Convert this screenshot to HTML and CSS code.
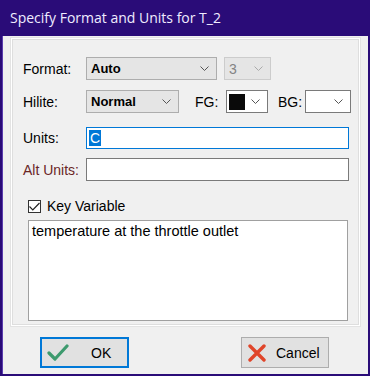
FILE: index.html
```html
<!DOCTYPE html>
<html lang="en">
<head>
    <meta charset="UTF-8">
    <title>Specify Format and Units for T_2</title>
    <link rel="stylesheet" href="styles.css">
</head>
<body>

<div class="window">
    <div class="titlebar">Specify Format and Units for T_2</div>

    <div class="client">
        <div class="group">
            <!-- формат -->
            <div class="row row-format">
                <span class="label">Format:</span>
                <div class="select sel-format"><span class="val bold">Auto</span><svg class="chev" width="9" height="5" viewBox="0 0 9 5"><path d="M0.5 0.5 L4.5 4.5 L8.5 0.5" fill="none" stroke="#555" stroke-width="1"/></svg></div>
                <div class="select sel-digits disabled"><span class="val">3</span><svg class="chev" width="9" height="5" viewBox="0 0 9 5"><path d="M0.5 0.5 L4.5 4.5 L8.5 0.5" fill="none" stroke="#aaa" stroke-width="1"/></svg></div>
            </div>

            <div class="row row-hilite">
                <span class="label">Hilite:</span>
                <div class="select sel-hilite"><span class="val bold">Normal</span><svg class="chev" width="9" height="5" viewBox="0 0 9 5"><path d="M0.5 0.5 L4.5 4.5 L8.5 0.5" fill="none" stroke="#555" stroke-width="1"/></svg></div>
                <span class="small-label fg-label">FG:</span>
                <div class="select white sel-fg"><span class="swatch"></span><svg class="chev" width="9" height="5" viewBox="0 0 9 5"><path d="M0.5 0.5 L4.5 4.5 L8.5 0.5" fill="none" stroke="#555" stroke-width="1"/></svg></div>
                <span class="small-label bg-label">BG:</span>
                <div class="select white sel-bg"><svg class="chev" width="9" height="5" viewBox="0 0 9 5"><path d="M0.5 0.5 L4.5 4.5 L8.5 0.5" fill="none" stroke="#555" stroke-width="1"/></svg></div>
            </div>

            <div class="row row-units">
                <span class="label">Units:</span>
                <div class="input focused"><span class="selected">C</span></div>
            </div>

            <div class="row row-alt">
                <span class="label alt">Alt Units:</span>
                <div class="input"></div>
            </div>

            <div class="check-row">
                <span class="checkbox"><svg width="11" height="9" viewBox="0 0 11 9"><path d="M0.5 4.5 L3.8 7.8 L10.5 1" fill="none" stroke="#222" stroke-width="1.2"/></svg></span>
                <span class="check-text">Key Variable</span>
            </div>

            <div class="notes">temperature at the throttle outlet</div>
        </div>

        <div class="buttons">
            <div class="btn btn-ok">
                <svg width="22" height="18" viewBox="0 0 22 18"><path d="M2 9 L8 15 L20 2" fill="none" stroke="#3d9a6e" stroke-width="3.2" stroke-linejoin="round" stroke-linecap="round"/></svg>
                <span>OK</span>
            </div>
            <div class="btn btn-cancel">
                <svg width="18" height="18" viewBox="0 0 18 18"><path d="M2 2 L16 16 M16 2 L2 16" fill="none" stroke="#e0452a" stroke-width="3.4" stroke-linecap="round"/></svg>
                <span>Cancel</span>
            </div>
        </div>
    </div>
</div>

</body>
</html>
```

FILE: styles.css
```css
body {
    margin: 0;
    padding: 0;
    font-family: "Liberation Sans", Arial, sans-serif;
    font-size: 14px;
    color: #000;
    background-color: #2a0c78;
}
.window {
    width: 370px;
    height: 376px;
    box-sizing: border-box;
    background-color: #2a0c78;
    display: flex;
    flex-direction: column;
}
.titlebar {
    height: 36px;
    line-height: 36px;
    padding-left: 10px;
    color: #f0ecff;
    font-family: "Open Sans", "Noto Sans", sans-serif;
    font-size: 14px;
}
.client {
    flex: 1;
    margin: 0 2px 2px 2px;
    background-color: #f0f0f0;
    padding-top: 2px;
    border-left: 1px solid #5a3cae;
}
.group {
    margin: 0 8px 0 8px;
    height: 288px;
    box-sizing: border-box;
    border: 1px solid #ffffff;
    box-shadow: inset 0 0 0 1px #dedede, 0 0 0 1px #e3e3e3;
    padding: 18px 0 0 11px;
}
.row {
    display: flex;
    align-items: center;
}
.label {
    width: 63px;
    flex-shrink: 0;
}
.label.alt {
    color: #6a2626;
}
.select {
    height: 23px;
    box-sizing: border-box;
    border: 1px solid #adadad;
    background-color: #e5e5e5;
    display: flex;
    align-items: center;
    padding: 0 7px 0 4px;
    position: relative;
}
.select .val {
    flex: 1;
}
.bold {
    font-weight: bold;
    font-size: 13px;
}
.chev {
    flex-shrink: 0;
}
.sel-format {
    width: 131px;
}
.sel-digits {
    width: 47px;
    margin-left: 7px;
    border-color: #cccccc;
    background-color: #e5e5e5;
    color: #838383;
}
.row-hilite {
    margin-top: 10px;
}
.sel-hilite {
    width: 93px;
}
.small-label {
    margin-left: 16px;
    width: 31px;
}
.bg-label {
    margin-left: 10px;
    width: 27px;
}
.select.white {
    background-color: #fff;
    border-color: #7a7a7a;
}
.sel-fg {
    width: 42px;
    padding-left: 2px;
}
.sel-bg {
    width: 46px;
    justify-content: flex-end;
}
.swatch {
    width: 17px;
    height: 16px;
    background-color: #0a0a0a;
    margin-right: 6px;
}
.input {
    width: 263px;
    height: 22px;
    box-sizing: border-box;
    border: 1px solid #7a7a7a;
    background-color: #fff;
    display: flex;
    align-items: center;
    padding-left: 2px;
}
.input.focused {
    border-color: #0078d7;
}
.selected {
    background-color: #0078d7;
    color: #fff;
    padding: 0 1px;
    line-height: 16px;
}
.row-units {
    margin-top: 14px;
}
.row-alt {
    margin-top: 9px;
}
.row-alt .input {
    height: 23px;
}
.check-row {
    display: flex;
    align-items: center;
    margin-top: 17px;
    padding-left: 5px;
}
.checkbox {
    width: 13px;
    height: 13px;
    box-sizing: border-box;
    border: 1px solid #333;
    background-color: #fff;
    display: flex;
    align-items: center;
    justify-content: center;
    margin-right: 6px;
}
.notes {
    margin: 6px 0 0 5px;
    width: 320px;
    height: 101px;
    box-sizing: border-box;
    border: 1px solid #a0a0a0;
    background-color: #fff;
    padding: 2px 3px;
    font-size: 14.5px;
}
.buttons {
    display: flex;
    padding: 11px 0 0 37px;
}
.btn {
    height: 31px;
    box-sizing: border-box;
    border: 1px solid #adadad;
    background-color: #e1e1e1;
    display: flex;
    align-items: center;
}
.btn-ok {
    width: 89px;
    border: 2px solid #0078d7;
    padding-left: 5px;
}
.btn-ok span {
    margin-left: 22px;
}
.btn-cancel {
    width: 88px;
    margin-left: 112px;
    padding-left: 6px;
}
.btn-cancel span {
    margin-left: 10px;
}
```
